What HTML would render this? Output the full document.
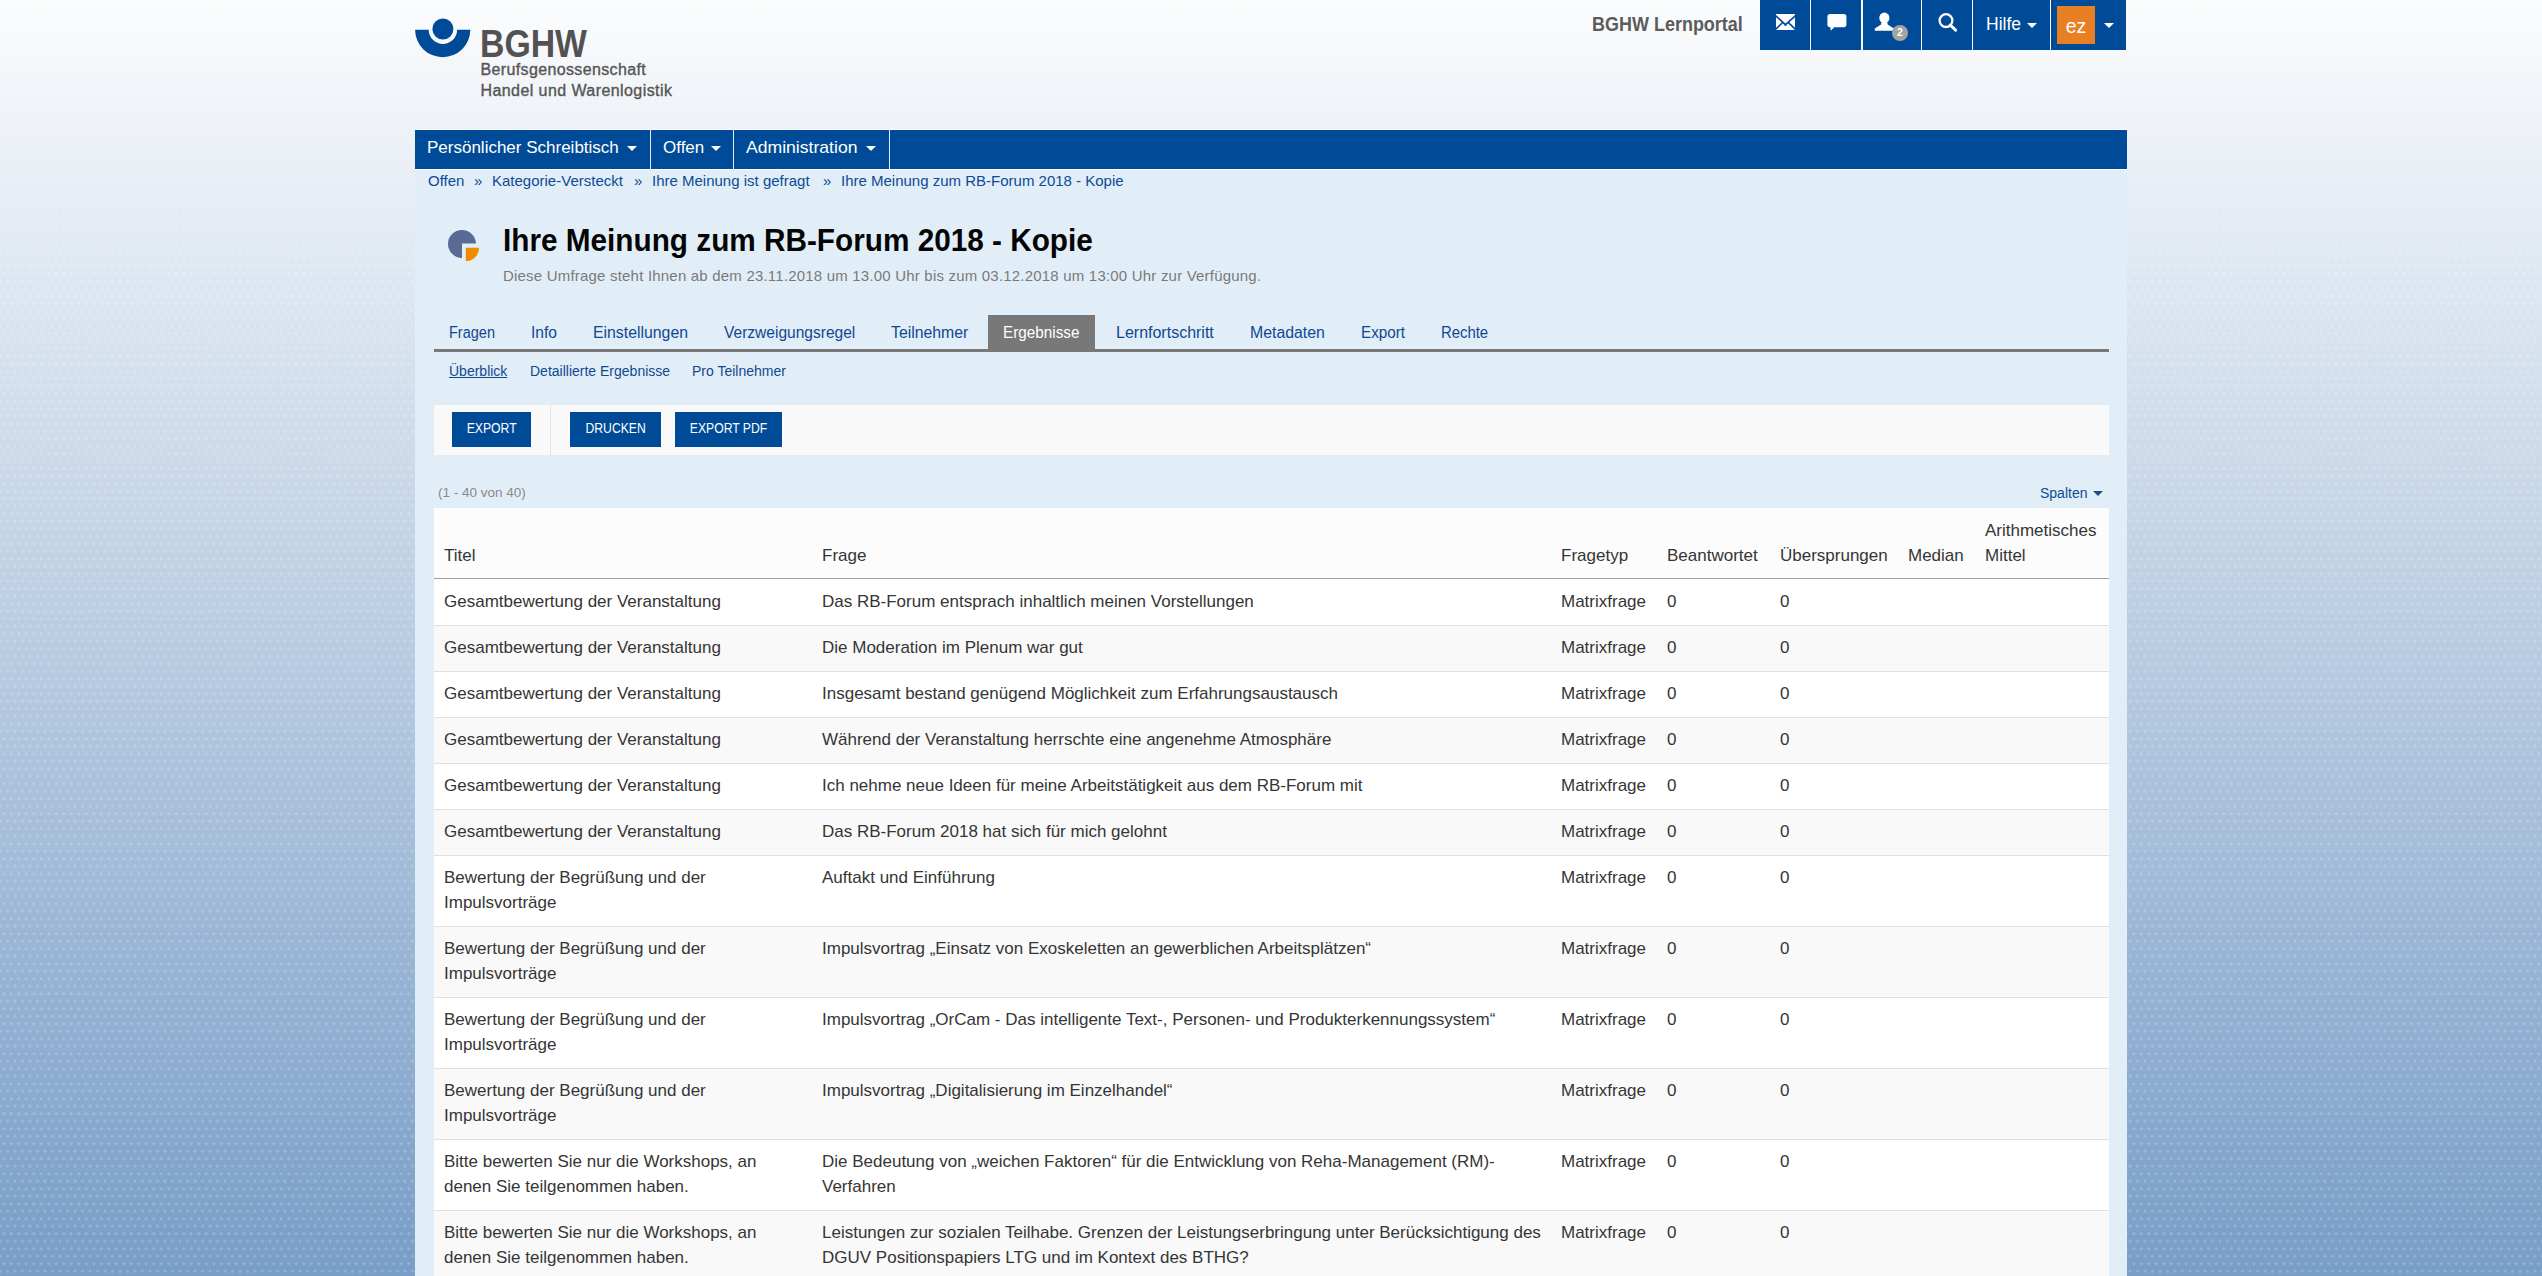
<!DOCTYPE html>
<html><head><meta charset="utf-8">
<style>
*{margin:0;padding:0;box-sizing:border-box}
html,body{width:2542px;height:1276px;overflow:hidden}
body{position:relative;font-family:"Liberation Sans",sans-serif;
background:
 radial-gradient(circle at 3.75px 3.75px, rgba(255,255,255,.2) 1.1px, rgba(255,255,255,0) 1.9px) 0 0/7.5px 15px,
 radial-gradient(circle at 3.75px 3.75px, rgba(255,255,255,.2) 1.1px, rgba(255,255,255,0) 1.9px) 3.75px 7.5px/7.5px 15px,
 linear-gradient(to bottom,rgb(251,252,253) 0px,rgb(239,243,248) 115px,rgb(120,157,199) 1276px);
}
.a{position:absolute;white-space:nowrap}
/* header */
#brand{left:1592px;top:12px;font-size:19.5px;font-weight:bold;color:#5c5c5c;line-height:24px;transform:scaleX(.922);transform-origin:0 0}
.tb{position:absolute;top:0;height:50px;background:#004b98}
.caret{position:absolute;width:0;height:0;border-left:5px solid transparent;border-right:5px solid transparent;border-top:5px solid #fff}
/* nav */
#nav{left:415px;top:130px;width:1712px;height:39px;background:#004b98}
.nv{position:absolute;top:128px;height:39px;font-size:17px;color:#fff;line-height:39px}
.nsep{position:absolute;top:0;width:1px;height:39px;background:#fff;opacity:.9}
#main{left:415px;top:170px;width:1712px;height:1106px;background:#e1eef8}
.bc{font-size:15px;color:#0d4a96;top:171.5px;line-height:18px}
#title{left:503px;top:222px;font-size:31.5px;font-weight:bold;color:#050505;line-height:36px;transform-origin:0 0;transform:scaleX(.944)}
#sub{left:503px;top:266.5px;font-size:15px;color:#7a7a7a;line-height:18px;letter-spacing:.2px}
.tab{position:absolute;top:315px;height:34px;font-size:16px;color:#0f4890;line-height:34px;padding-top:1px;white-space:nowrap}
#tabline{left:434px;top:349px;width:1675px;height:3px;background:#787878}
.st{font-size:14px;color:#11498f;top:363px;line-height:17px}
#toolbar{left:434px;top:405px;width:1675px;height:50px;background:#f9f9f9}
.btn{position:absolute;top:412px;height:35px;background:#004b98;color:#fff;font-size:14px;line-height:33px;text-align:center}
.btn span{display:inline-block;transform:scaleX(.87)}
#count{left:438px;top:483.5px;font-size:13.5px;color:#8a8a8a;line-height:17px}
#spalten{left:2040px;top:484.5px;font-size:14px;color:#0d4a96;line-height:17px}
table{position:absolute;left:434px;top:508px;width:1675px;border-collapse:collapse;table-layout:fixed;font-size:17px;color:#353535;line-height:25px}
th{font-weight:normal;text-align:left;vertical-align:bottom;padding:9px 10px 10px 10px;background:#fcfcfc;border-bottom:1px solid #a0a0a0;height:70px}
td{vertical-align:top;padding:9px 10px 11px 10px;border-bottom:1px solid #e0e0e0;white-space:nowrap}
tr:nth-child(odd) td{background:#fff}
tbody tr:first-child td{padding-top:10px}
tr:nth-child(even) td{background:#f9f9f9}
</style></head><body>

<!-- logo -->
<svg class="a" style="left:413px;top:17px" width="62" height="44" viewBox="413 17 62 44">
  <path d="M415.1 29.8 H470.3 A27.6 27.4 0 0 1 415.1 29.8 Z M428.7 29.8 A14.2 14.2 0 0 0 457.1 29.8 Z" fill="#004b98" fill-rule="evenodd"/>
  <circle cx="442.9" cy="29" r="10.5" fill="#004b98"/>
</svg>
<div class="a" id="logo1" style="left:479.5px;top:23px;font-size:38.5px;font-weight:bold;color:#525252;line-height:42px;transform:scaleX(.878);transform-origin:0 0">BGHW</div>
<div class="a" style="left:480.5px;top:60px;font-size:16px;color:#555;line-height:20px;letter-spacing:.36px;-webkit-text-stroke:.35px #555">Berufsgenossenschaft</div>
<div class="a" style="left:480.5px;top:81px;font-size:16px;color:#555;line-height:20px;letter-spacing:.42px;-webkit-text-stroke:.35px #555">Handel und Warenlogistik</div>

<div class="a" id="brand">BGHW Lernportal</div>

<!-- top toolbar -->
<div class="tb" style="left:1760px;width:50px"></div>
<div class="tb" style="left:1811px;width:50px"></div>
<div class="tb" style="left:1863px;width:58px"></div>
<div class="tb" style="left:1922px;width:50px"></div>
<div class="tb" style="left:1973px;width:77px"></div>
<div class="tb" style="left:2051px;width:75px"></div>


<!-- top icons -->
<svg class="a" style="left:1776px;top:14px" width="19" height="16" viewBox="0 0 19 16">
  <rect x="0" y="0" width="19" height="16" fill="#fff"/>
  <path d="M-0.5 1.6 L9.5 10.6 L19.5 1.6 M-0.5 15.4 L6.6 8.6 M19.5 15.4 L12.4 8.6" stroke="#004b98" stroke-width="1.6" fill="none"/>
  <path d="M7.6 10.4 L9.5 12.2 L11.4 10.4 Z" fill="#004b98"/>
</svg>
<svg class="a" style="left:1826px;top:13px" width="22" height="19" viewBox="0 0 22 19">
  <rect x="1.4" y="1" width="19" height="13.2" rx="2.6" fill="#fff"/>
  <path d="M4.2 13 L4.8 17.8 L9.4 13 Z" fill="#fff"/>
</svg>
<svg class="a" style="left:1873px;top:11px" width="22" height="21" viewBox="0 0 22 21">
  <ellipse cx="11.35" cy="7" rx="5.1" ry="5.4" fill="#fff"/>
  <path d="M8.3 11.6 L14.4 11.6 L14.6 13.5 L20.9 17.6 L20.9 19.7 L1.8 19.7 L1.8 17.6 L8.1 13.5 Z" fill="#fff"/>
</svg>
<div class="a" style="left:1892px;top:25px;width:16px;height:16px;border-radius:50%;background:#a3a3a3;color:#fff;font-size:10.5px;font-weight:bold;line-height:15px;text-align:center">2</div>
<svg class="a" style="left:1936px;top:11px" width="24" height="22" viewBox="0 0 24 22">
  <circle cx="10" cy="9.6" r="6.4" stroke="#fff" stroke-width="2.3" fill="none"/>
  <path d="M14.2 14 L19.6 19.2" stroke="#fff" stroke-width="3" stroke-linecap="round"/>
</svg>
<div class="a" style="left:1986px;top:12px;font-size:17.5px;color:#fff;line-height:24px">Hilfe</div>
<div class="caret" style="left:2027px;top:23px"></div>
<div class="a" style="left:2057px;top:6px;width:38px;height:38px;background:#e87f22;color:#fff;font-size:19.5px;line-height:40px;text-align:center">ez</div>
<div class="caret" style="left:2104px;top:23px"></div>

<!-- nav -->
<div class="a" style="left:415px;top:129px;width:1712px;height:41px;background:#fff"></div>
<div class="a" id="nav"></div>
<div class="nv" style="left:427px">Persönlicher Schreibtisch</div>
<div class="caret" style="left:627px;top:146px"></div>
<div class="nsep" style="left:650px;top:130px"></div>
<div class="nv" style="left:663px">Offen</div>
<div class="caret" style="left:711px;top:146px"></div>
<div class="nsep" style="left:733px;top:130px"></div>
<div class="nv" style="left:746px;transform:scaleX(1.035);transform-origin:0 0">Administration</div>
<div class="caret" style="left:866px;top:146px"></div>
<div class="nsep" style="left:889px;top:130px"></div>

<div class="a" id="main"></div>


<!-- breadcrumb -->
<div class="a bc" style="left:428px">Offen</div>
<div class="a bc" style="left:474px">»</div>
<div class="a bc" style="left:492px">Kategorie-Versteckt</div>
<div class="a bc" style="left:634px">»</div>
<div class="a bc" style="left:652px">Ihre Meinung ist gefragt</div>
<div class="a bc" style="left:823px">»</div>
<div class="a bc" style="left:841px">Ihre Meinung zum RB-Forum 2018 - Kopie</div>

<!-- title -->
<svg class="a" style="left:446px;top:228px" width="36" height="36" viewBox="446 228 36 36">
  <path d="M462 229.9 A14 14 0 1 0 462 257.9 V243.6 H476 A14 14 0 0 0 462 229.9 Z" fill="#586a95"/>
  <path d="M465.8 247.8 H479.1 A13.3 13.3 0 0 1 465.8 261.1 Z" fill="#ef8d00"/>
</svg>
<div class="a" id="title">Ihre Meinung zum RB-Forum 2018 - Kopie</div>
<div class="a" id="sub">Diese Umfrage steht Ihnen ab dem 23.11.2018 um 13.00 Uhr bis zum 03.12.2018 um 13:00 Uhr zur Verfügung.</div>

<!-- tabs -->
<div class="a" style="left:988px;top:315px;width:107px;height:34px;background:#787878"></div>
<div class="tab" style="left:449px;transform:scaleX(0.907);transform-origin:0 0">Fragen</div>
<div class="tab" style="left:531px;transform:scaleX(0.974);transform-origin:0 0">Info</div>
<div class="tab" style="left:593px;transform:scaleX(0.989);transform-origin:0 0">Einstellungen</div>
<div class="tab" style="left:724px;transform:scaleX(0.971);transform-origin:0 0">Verzweigungsregel</div>
<div class="tab" style="left:891px;transform:scaleX(0.988);transform-origin:0 0">Teilnehmer</div>
<div class="tab" style="left:1003px;color:#fff;transform:scaleX(0.955);transform-origin:0 0">Ergebnisse</div>
<div class="tab" style="left:1116px">Lernfortschritt</div>
<div class="tab" style="left:1250px;transform:scaleX(0.99);transform-origin:0 0">Metadaten</div>
<div class="tab" style="left:1361px;transform:scaleX(0.95);transform-origin:0 0">Export</div>
<div class="tab" style="left:1441px;transform:scaleX(0.93);transform-origin:0 0">Rechte</div>
<div class="a" id="tabline"></div>

<div class="a st" style="left:449px;text-decoration:underline">Überblick</div>
<div class="a st" style="left:530px">Detaillierte Ergebnisse</div>
<div class="a st" style="left:692px">Pro Teilnehmer</div>

<!-- toolbar -->
<div class="a" id="toolbar"></div>
<div class="a" style="left:550px;top:405px;width:1px;height:50px;background:#e2e2e2"></div>
<div class="btn" style="left:452px;width:79px"><span>EXPORT</span></div>
<div class="btn" style="left:570px;width:91px"><span>DRUCKEN</span></div>
<div class="btn" style="left:675px;width:107px"><span>EXPORT PDF</span></div>

<div class="a" id="count">(1 - 40 von 40)</div>
<div class="a" id="spalten">Spalten</div>
<div class="a" style="left:2093px;top:491px;width:0;height:0;border-left:5px solid transparent;border-right:5px solid transparent;border-top:5px solid #1e4e8c"></div>

<table>
<colgroup><col style="width:378px"><col style="width:739px"><col style="width:106px"><col style="width:113px"><col style="width:128px"><col style="width:77px"><col style="width:134px"></colgroup>
<thead><tr><th>Titel</th><th>Frage</th><th>Fragetyp</th><th>Beantwortet</th><th>Übersprungen</th><th>Median</th><th>Arithmetisches<br>Mittel</th></tr></thead>
<tbody>
<tr><td>Gesamtbewertung der Veranstaltung</td><td>Das RB-Forum entsprach inhaltlich meinen Vorstellungen</td><td>Matrixfrage</td><td>0</td><td>0</td><td></td><td></td></tr>
<tr><td>Gesamtbewertung der Veranstaltung</td><td>Die Moderation im Plenum war gut</td><td>Matrixfrage</td><td>0</td><td>0</td><td></td><td></td></tr>
<tr><td>Gesamtbewertung der Veranstaltung</td><td>Insgesamt bestand genügend Möglichkeit zum Erfahrungsaustausch</td><td>Matrixfrage</td><td>0</td><td>0</td><td></td><td></td></tr>
<tr><td>Gesamtbewertung der Veranstaltung</td><td>Während der Veranstaltung herrschte eine angenehme Atmosphäre</td><td>Matrixfrage</td><td>0</td><td>0</td><td></td><td></td></tr>
<tr><td>Gesamtbewertung der Veranstaltung</td><td>Ich nehme neue Ideen für meine Arbeitstätigkeit aus dem RB-Forum mit</td><td>Matrixfrage</td><td>0</td><td>0</td><td></td><td></td></tr>
<tr><td>Gesamtbewertung der Veranstaltung</td><td>Das RB-Forum 2018 hat sich für mich gelohnt</td><td>Matrixfrage</td><td>0</td><td>0</td><td></td><td></td></tr>
<tr><td>Bewertung der Begrüßung und der<br>Impulsvorträge</td><td>Auftakt und Einführung</td><td>Matrixfrage</td><td>0</td><td>0</td><td></td><td></td></tr>
<tr><td>Bewertung der Begrüßung und der<br>Impulsvorträge</td><td>Impulsvortrag „Einsatz von Exoskeletten an gewerblichen Arbeitsplätzen“</td><td>Matrixfrage</td><td>0</td><td>0</td><td></td><td></td></tr>
<tr><td>Bewertung der Begrüßung und der<br>Impulsvorträge</td><td>Impulsvortrag „OrCam - Das intelligente Text-, Personen- und Produkterkennungssystem“</td><td>Matrixfrage</td><td>0</td><td>0</td><td></td><td></td></tr>
<tr><td>Bewertung der Begrüßung und der<br>Impulsvorträge</td><td>Impulsvortrag „Digitalisierung im Einzelhandel“</td><td>Matrixfrage</td><td>0</td><td>0</td><td></td><td></td></tr>
<tr><td>Bitte bewerten Sie nur die Workshops, an<br>denen Sie teilgenommen haben.</td><td>Die Bedeutung von „weichen Faktoren“ für die Entwicklung von Reha-Management (RM)-<br>Verfahren</td><td>Matrixfrage</td><td>0</td><td>0</td><td></td><td></td></tr>
<tr><td>Bitte bewerten Sie nur die Workshops, an<br>denen Sie teilgenommen haben.</td><td>Leistungen zur sozialen Teilhabe. Grenzen der Leistungserbringung unter Berücksichtigung des<br>DGUV Positionspapiers LTG und im Kontext des BTHG?</td><td>Matrixfrage</td><td>0</td><td>0</td><td></td><td></td></tr>
</tbody></table>
</body></html>
